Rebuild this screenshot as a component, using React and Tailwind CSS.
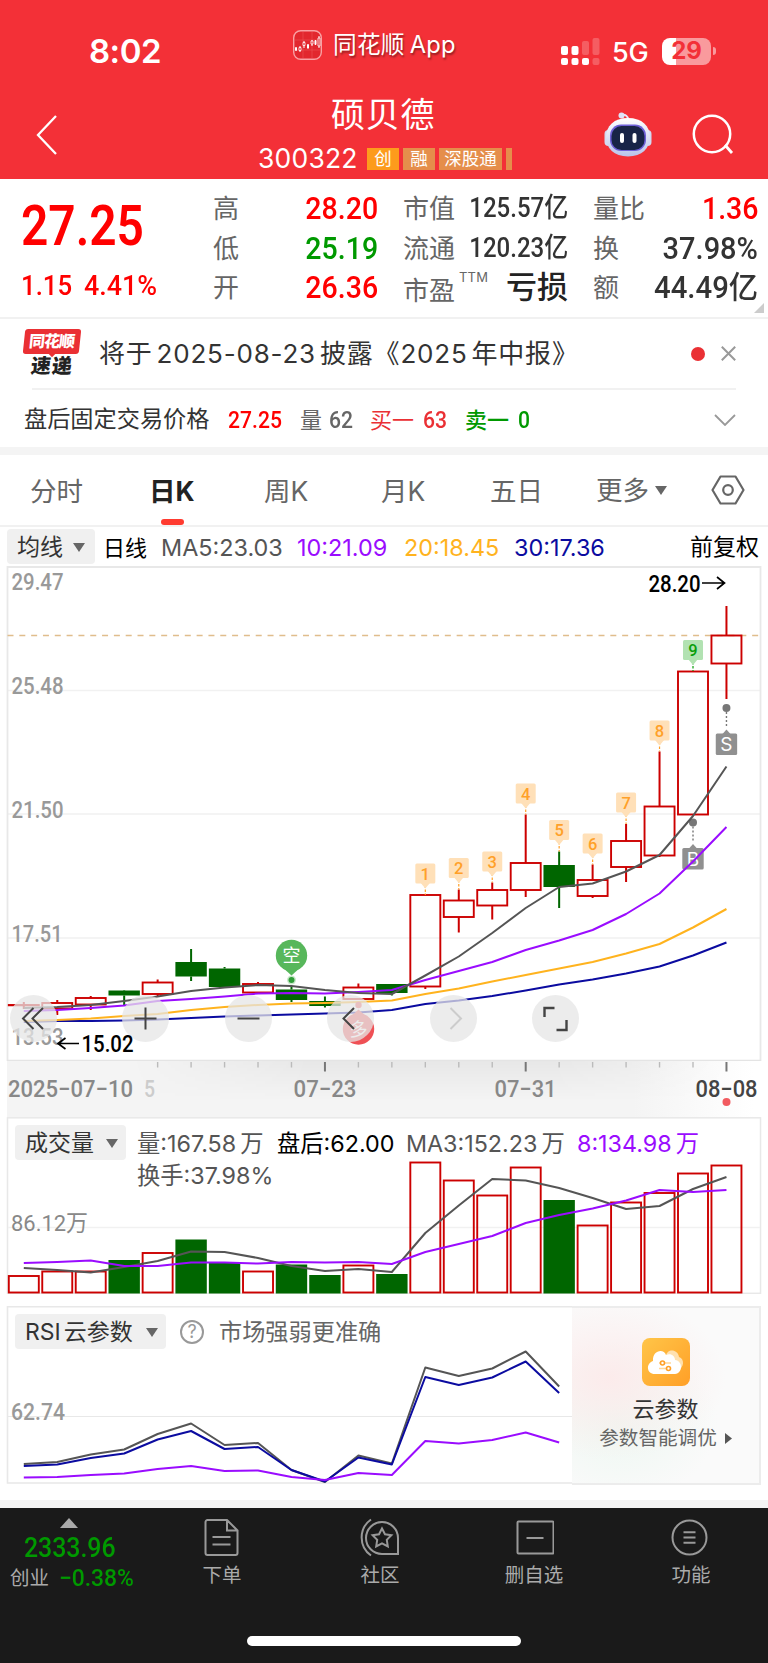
import React from "react";

const DARK = "#555555";
const PURPLE = "#9a0cff";
const ORANGE = "#ffb31e";
const NAVY = "#0b0ba0";
const RED = "#cc0000";
const GREEN = "#006600";

// [open/close top, open/close bottom, high, low, is up]
const candles = [
  [1005, 1005, 1002, 1009, true],
  [1003, 1008.5, 1000, 1015, true],
  [998, 1004.5, 996, 1010, true],
  [990.5, 995.5, 990, 1006, false],
  [982.5, 994, 979.5, 996.5, true],
  [962, 976.5, 949, 981, false],
  [968.5, 987, 967, 987, false],
  [984, 992.5, 982, 992.5, true],
  [989.5, 1000, 986, 1002, false],
  [1001, 1006, 996.5, 1007.5, false],
  [987.5, 999, 983.5, 999, true],
  [984, 993, 984, 995.5, false],
  [895, 986.5, 895, 989, true],
  [900.5, 917, 889.5, 932.5, true],
  [890, 905.5, 882.5, 919.5, true],
  [863, 890, 814.5, 897, true],
  [865, 887, 851.5, 908, false],
  [880, 896, 864.5, 898, true],
  [841, 867, 824, 882, true],
  [806.5, 855.5, 751.5, 857, true],
  [671.5, 814.5, 671.5, 814.5, true],
  [635.5, 663.5, 606, 699, true],
];

const ma5 = [1008, 1007, 1005, 1001, 996.5, 991, 987.5, 985, 986, 990, 993, 994, 975.5, 956.5, 933, 908, 887, 883.5, 871.5, 855, 816, 766.5];
const ma10 = [1011, 1010, 1008, 1005.5, 1001, 999, 996.5, 993.5, 993, 993.5, 992, 990, 980, 971, 962, 950, 940.5, 930, 914, 893.5, 861.5, 827];
const ma20 = [1021, 1020, 1018.5, 1016, 1014, 1010, 1007, 1005, 1003.5, 1003, 1002, 1000.5, 994, 988.5, 981.5, 975, 968.5, 962, 953.5, 944, 927.5, 909];
const ma30 = [1022, 1021, 1021, 1020.5, 1019.5, 1018, 1016.5, 1015.5, 1014.5, 1013.5, 1012.5, 1010, 1004, 1000.5, 996, 990.5, 984.5, 979.5, 973.5, 966.5, 955.5, 942.5];

const volumes = [1275.5, 1271, 1271, 1260, 1252.5, 1239.5, 1262, 1271, 1264.5, 1275, 1265, 1274, 1162, 1180, 1195, 1167, 1200, 1225, 1202, 1192.5, 1173, 1165];
const vol3 = [1268, 1270, 1272.5, 1267, 1261, 1251.5, 1252, 1258, 1266, 1271, 1269, 1272, 1233, 1205.5, 1179, 1180.5, 1188, 1198, 1209, 1206, 1189, 1177];
const vol8 = [1263, 1262, 1260.5, 1266, 1266, 1262.5, 1262.5, 1263.5, 1262, 1262.5, 1262, 1264, 1252, 1244, 1236, 1223, 1215, 1208.5, 1200.5, 1190, 1192, 1190];

const rsi6 = [1464, 1462, 1454.5, 1449.5, 1434, 1423.5, 1445, 1443, 1470, 1482, 1455.5, 1463.5, 1367.5, 1376, 1368.5, 1351.5, 1386.5];
const rsi12 = [1466, 1464.5, 1458, 1453.5, 1439.5, 1431, 1449, 1447, 1470, 1481.5, 1457.5, 1464.5, 1377, 1385, 1377.5, 1361.5, 1393];
const rsi24 = [1477.5, 1477, 1475, 1473.5, 1469, 1466, 1471, 1470.5, 1477, 1480, 1473, 1475, 1441, 1443.5, 1440, 1432.5, 1442.5];

const nine = [
  [1, 12, 863.5],
  [2, 13, 858],
  [3, 14, 851.5],
  [4, 15, 783.5],
  [5, 16, 820],
  [6, 17, 833.5],
  [7, 18, 792.5],
  [8, 19, 720.5],
  [9, 20, 640],
];

const cx = (i) => 23.8 + i * 33.46;
const points = (data) => data.map((y, i) => `${cx(i)},${y}`).join(" ");

const Line = ({ data, color }) => (
  <polyline points={points(data)} fill="none" stroke={color} strokeWidth="2" strokeLinejoin="round" />
);

const Label = ({ x, y, w, size = 24, color = "#999999", weight = 500, children }) => (
  <text
    x={x}
    y={y}
    fontSize={size}
    fill={color}
    fontWeight={weight}
    textLength={w}
    lengthAdjust="spacingAndGlyphs"
    fontFamily="Roboto, 'Noto Sans CJK SC', sans-serif"
  >
    {children}
  </text>
);

const Num = ({ className, children }) => (
  <span className={`inline-block whitespace-nowrap font-['Roboto','Noto_Sans_CJK_SC',sans-serif] font-medium ${className}`}>{children}</span>
);

const Caret = () => (
  <svg className="shrink-0" width="12" height="9" viewBox="0 0 12 9">
    <path d="M0 0h12L6 9z" fill="#666" />
  </svg>
);

const StatusBar = () => (
  <div className="flex h-[94px] items-center text-white">
    <div className="ml-[89px] w-[204px] pt-[9px] text-[33px] font-semibold leading-none tracking-[-0.5px]">8:02</div>
    <svg width="29" height="30" viewBox="0 0 29 30" className="-mt-[5px]">
      <rect x="0.7" y="0.7" width="27.6" height="28.6" rx="7" fill="#e2272e" stroke="#f9a0a3" strokeWidth="1.4" />
      <path d="M2 10h25M2 20h25M10 2v26M19 2v26" stroke="#ee5a5f" strokeWidth="0.5" />
      <path d="M3 17v4M7 16v6M11 11v7M15 14v5M19 10v6M22.500 10v5M26 6v12" stroke="#fff" strokeWidth="1" />
      <path d="M2 17.500h2v3H2zM14 14.500h2v3.500h-2zM21.500 10.500h2v4h-2z" fill="#fff" />
      <path d="M6 17.500h2v3H6zM10 12.500h2v3h-2zM18 11h2v3h-2zM25 8h2v8h-2z" fill="#e2272e" stroke="#fff" strokeWidth="0.8" />
    </svg>
    <div className="-mt-[4px] ml-[11px] w-[228px] whitespace-nowrap text-[23.7px] leading-none tracking-[0.2px] [text-shadow:1px_2px_2px_rgba(0,0,0,.4)]">
      同花顺<span className="ml-[5px]">App</span>
    </div>
    <svg width="40" height="28" viewBox="0 0 40 28" className="mt-[9px]" fill="#fff">
      <rect x="0" y="8" width="7" height="9" rx="2" />
      <rect x="10.500" y="8" width="7" height="9" rx="2" />
      <rect x="21" y="3" width="7" height="14" rx="2" opacity=".22" />
      <rect x="31.500" y="0" width="7" height="17" rx="2" opacity=".22" />
      <rect x="0" y="20" width="7" height="7" rx="2" />
      <rect x="10.500" y="20" width="7" height="7" rx="2" />
      <rect x="21" y="20" width="7" height="7" rx="2" />
      <rect x="31.500" y="20" width="7" height="7" rx="2" opacity=".22" />
    </svg>
    <div className="ml-[11px] w-[50px] pt-[10px] text-[27px] font-medium leading-none tracking-[-0.3px]">5G</div>
    <div className="mt-[8px] flex h-[27px] w-[49px] items-center justify-center rounded-[8px] bg-[linear-gradient(90deg,#fff_29%,#f99a9d_29%)] text-[24px] font-bold leading-none text-[#f33037]">
      29
    </div>
    <div className="ml-[2px] mt-[8px] h-[8px] w-[3px] rounded-r-full bg-[#f99a9d]" />
  </div>
);

const Robot = () => (
  <svg width="48" height="46" viewBox="0 0 48 46" className="shrink-0">
    <defs>
      <linearGradient id="rb" x1="0" y1="0" x2="0" y2="1">
        <stop offset="0" stopColor="#ffffff" />
        <stop offset="1" stopColor="#b9c3ea" />
      </linearGradient>
    </defs>
    <path d="M17.500 4q6-1 7 5" fill="none" stroke="#e7e9fb" strokeWidth="2" />
    <circle cx="17.500" cy="4.500" r="3" fill="#dfe3f7" />
    <rect x="0.500" y="19" width="8" height="16" rx="4" fill="#d4d9f2" />
    <rect x="39.500" y="19" width="8" height="16" rx="4" fill="#d4d9f2" />
    <path d="M24 7c14 0 22 8 22 19S38 45.500 24 45.500 2 37 2 26 10 7 24 7z" fill="url(#rb)" />
    <rect x="6" y="13.500" width="36" height="26.500" rx="11" fill="#6d5fd6" />
    <rect x="7.500" y="15" width="33" height="24" rx="10" fill="#182447" />
    <rect x="16" y="22" width="4" height="10" rx="2" fill="#fff" />
    <rect x="28.500" y="22" width="4" height="10" rx="2" fill="#fff" />
  </svg>
);

const TitleBar = () => (
  <div className="flex h-[85px] text-white">
    <svg width="22" height="40" viewBox="0 0 22 40" className="ml-[36px] mt-[21px]">
      <path d="M20 1L2 20l18 19" fill="none" stroke="#fff" strokeWidth="2.300" />
    </svg>
    <div className="ml-[200px] w-[254px] shrink-0">
      <div className="h-[51px] pl-[73px] pt-[3px] text-[34px] leading-[36px] tracking-[0.8px]">硕贝德</div>
      <div className="flex h-[27px] items-center">
        <span className="-mt-px w-[110px] text-[26.5px] leading-none tracking-[0.2px]">300322</span>
        <div className="flex gap-1 pt-[1px] text-[17.5px] leading-[22px]">
          <span className="w-8 bg-[#fd9b1c] text-center">创</span>
          <span className="w-8 bg-[#e58e4b] text-center">融</span>
          <span className="w-[63px] bg-[#e58e4b] text-center">深股通</span>
          <span className="w-[6px] bg-[#e58e4b]" />
        </div>
      </div>
    </div>
    <div className="ml-[92px] mt-[17px] flex">
      <Robot />
      <svg width="42" height="42" viewBox="0 0 42 42" className="ml-[40px] mt-[3px]">
        <circle cx="20" cy="20" r="18.200" fill="none" stroke="#fff" strokeWidth="2.500" />
        <path d="M33 31l7 8" stroke="#fff" strokeWidth="2.800" />
      </svg>
    </div>
  </div>
);

const Quote = () => (
  <div className="relative flex h-[140px] border-b-2 border-[#f1f1f1]">
    <div className="w-[213px] pl-[21px] pt-[18px]">
      <Num className="h-[75px] w-[160px] origin-left scale-x-[.87] text-[55px] font-semibold leading-[58px] text-[#ff0000]">27.25</Num>
      <div className="flex text-[#ff0000]">
        <Num className="w-[63px] origin-left scale-x-[.92] text-[28px] leading-[28px]">1.15</Num>
        <Num className="origin-left scale-x-[.96] text-[28px] leading-[28px]">4.41%</Num>
      </div>
    </div>
    <div className="w-[165px] pt-[10px] text-[26px] leading-[39.5px] text-[#666]">
      <div className="flex justify-between">高<Num className="origin-right scale-x-[.92] text-[31px] text-[#ff0000]">28.20</Num></div>
      <div className="flex justify-between">低<Num className="origin-right scale-x-[.92] text-[31px] text-[#009900]">25.19</Num></div>
      <div className="flex justify-between">开<Num className="origin-right scale-x-[.92] text-[31px] text-[#ff0000]">26.36</Num></div>
    </div>
    <div className="ml-[25px] w-[165px] pt-[10px] text-[26px] leading-[39.5px] text-[#666]">
      <div className="flex justify-between">市值<Num className="-ml-5 origin-right scale-x-[.89] text-[27px] text-[#333]">125.57亿</Num></div>
      <div className="flex justify-between">流通<Num className="-ml-5 origin-right scale-x-[.89] text-[27px] text-[#333]">120.23亿</Num></div>
      <div className="flex">
        <span className="pt-[3px]">市盈</span>
        <span className="-mt-[4px] ml-1 h-4 text-[13px] leading-[26px] tracking-[0.2px]">TTM</span>
        <span className="-mt-px ml-auto text-[31px] font-medium text-[#222]">亏损</span>
      </div>
    </div>
    <div className="ml-[25px] w-[165px] pt-[10px] text-[26px] leading-[39.5px] text-[#666]">
      <div className="flex justify-between">量比<Num className="origin-right scale-x-[.92] text-[31px] text-[#ff0000]">1.36</Num></div>
      <div className="flex justify-between">换<Num className="origin-right scale-x-[.935] text-[31px] text-[#333]">37.98%</Num></div>
      <div className="flex justify-between">额<Num className="origin-right scale-x-[.945] text-[31px] text-[#333]">44.49亿</Num></div>
    </div>
    <svg className="absolute bottom-1 right-1" width="10" height="10" viewBox="0 0 10 10">
      <path d="M10 0v10H0z" fill="#ccc" />
    </svg>
  </div>
);

const News = () => (
  <>
    <div className="flex h-[69px] items-center pl-[24px] pr-8">
      <div className="relative mt-[-2px] h-[48px] w-[58px] shrink-0 font-black leading-none">
        <div className="h-[25px] w-[56px] -skew-x-6 rounded-[3px] bg-[#ea3034] pt-[4px] text-center text-[16px] text-white">
          <span className="-ml-px tracking-[-1px]">同花顺</span>
        </div>
        <div className="absolute left-[25px] top-[21px] h-[6px] w-[6px] rotate-45 bg-[#ea3034]" />
        <div className="-skew-x-6 pl-[7px] pt-[2px] text-[20px] tracking-[1px] text-[#222]">速递</div>
      </div>
      <div className="ml-[17px] whitespace-nowrap text-[26px] leading-none tracking-[0.8px] text-[#333]">
        将于<span className="mx-[4px]">2025-08-23</span>披露《2025<span className="ml-[4px]">年中报》</span>
      </div>
      <div className="ml-auto mr-[16px] h-[14px] w-[14px] shrink-0 rounded-full bg-[#ea3034]" />
      <svg width="15" height="15" viewBox="0 0 15 15" className="shrink-0">
        <path d="M.8.8l13.400 13.400M14.200.8L.8 14.200" stroke="#999" strokeWidth="2" />
      </svg>
    </div>
    <div className="mx-8 h-[2px] bg-[#f1f1f1]" />
    <div className="flex h-[57px] items-center pl-[24px] pr-8 pt-[2px] text-[23.2px] leading-none">
      <span className="w-[204px] text-[#333]">盘后固定交易价格</span>
      <Num className="w-[72px] origin-left scale-x-[.88] text-[24px] text-[#ff0000]">27.25</Num>
      <span className="w-[29px] text-[22px] text-[#666]">量</span>
      <Num className="w-[41px] origin-left scale-x-[.88] text-[24px] text-[#666]">62</Num>
      <span className="w-[53px] text-[22px] text-[#ea3034]">买一</span>
      <Num className="w-[42px] origin-left scale-x-[.88] text-[24px] text-[#ea3034]">63</Num>
      <span className="w-[53px] text-[22px] font-medium text-[#009900]">卖一</span>
      <Num className="origin-left scale-x-[.88] text-[24px] text-[#009900]">0</Num>
      <svg width="22" height="12" viewBox="0 0 22 12" className="ml-auto">
        <path d="M1 1l10 10L21 1" fill="none" stroke="#999" strokeWidth="1.800" />
      </svg>
    </div>
    <div className="h-[8px] bg-[#f4f4f4]" />
  </>
);

const Tabs = () => (
  <div className="flex h-[72px] border-b-2 border-[#f1f1f1] pl-[30px] text-[26.5px] leading-[72px] text-[#666]">
    <span className="w-[119px]">分时</span>
    <span className="relative w-[115px] font-bold text-[#222]">
      日K
      <i className="absolute bottom-0 left-[12px] h-[6px] w-[23px] rounded-[3px] bg-[#ff3b30]" />
    </span>
    <span className="w-[117px]">周K</span>
    <span className="w-[109px]">月K</span>
    <span className="w-[106px]">五日</span>
    <span className="flex w-[115px] items-center gap-[6px]">更多<Caret /></span>
    <svg width="34" height="30" viewBox="0 0 34 30" className="mt-[20px]">
      <path d="M9.500 1.500h15L32.500 15l-8 13.500h-15L1.500 15z" fill="none" stroke="#666" strokeWidth="2.200" strokeLinejoin="round" />
      <circle cx="17" cy="15" r="4.800" fill="none" stroke="#666" strokeWidth="2.200" />
    </svg>
  </div>
);

const MaRow = () => (
  <div className="flex h-[39px] items-center whitespace-nowrap pl-[7px] pr-[9px] text-[23.4px] leading-none">
    <div className="flex h-[35px] w-[88px] items-center justify-between rounded-[4px] bg-[#f0f0f0] pl-[10px] pr-[10px] pt-px text-[23px] text-[#333]">
      均线<Caret />
    </div>
    <span className="ml-2 w-[58px] pt-[2px] text-[22px] text-black">日线</span>
    <span className="w-[136px] pt-[2px] text-[#555]">MA5:23.03</span>
    <span className="w-[107px] pt-[2px] text-[#9a0cff]">10:21.09</span>
    <span className="w-[110px] pt-[2px] text-[#ffb31e]">20:18.45</span>
    <span className="pt-[2px] text-[#0b0ba0]">30:17.36</span>
    <span className="ml-auto pt-[2px] text-[23px] text-black">前复权</span>
  </div>
);

const NineTag = ({ n, i, y }) => {
  const x = cx(i);
  const bg = n === 9 ? "#b2e2b2" : "#ffe0b8";
  const fg = n === 9 ? "#0a9e0a" : "#ffa028";
  const end = n === 9 ? 671 : candles[i][2];
  return (
    <g>
      <path d={`M${x} ${y + 22}V${end}`} stroke={fg} strokeWidth="1.200" strokeDasharray="2.500 1.500" />
      <path d={`M${x - 5} ${y + 19}h10l-5 6z`} fill={bg} />
      <rect x={x - 10} y={y} width="20" height="20" rx="1.500" fill={bg} />
      <text x={x} y={y + 16} textAnchor="middle" fontSize="16.500" fontWeight="500" fill={fg} fontFamily="Roboto, sans-serif">
        {n}
      </text>
    </g>
  );
};

const TradeTag = ({ x, y, children }) => (
  <g>
    <circle cx={x} cy={y} r="4" fill="#777" />
    <path d={`M${x} ${y + 4}v15`} stroke="#777" strokeWidth="1.400" strokeDasharray="2 2" />
    <path d={`M${x - 4} ${y + 26}l4-4.500 4 4.500z`} fill="#909090" />
    <rect x={x - 10.7} y={y + 25.5} width="21.4" height="21.500" rx="1.500" fill="#909090" />
    <text x={x} y={y + 43} textAnchor="middle" fontSize="19" fill="#fff" fontFamily="Inter, sans-serif">
      {children}
    </text>
  </g>
);

// back, zoom in, zoom out, previous, next, full screen
const tools = [
  "M23.500 13L13 23.500 23.500 34M33 13L22.500 23.500 33 34",
  "M12.500 23.500h22M23.500 12.500v22",
  "M12.500 23.500h22",
  "M27 13L16.500 23.500 27 34",
  "M20.500 13L31 23.500 20.500 34",
  "M12.500 22V13h10M34.500 25v10h-10",
];

const KChart = () => (
  <div className="relative h-[495px]">
    <svg width="768" height="495" viewBox="0 566 768 495" className="block">
      <path d="M8 690.500H760M8 814H760M8 938H760" stroke="#f1f1f1" strokeWidth="1.500" />
      <path d="M7.500 1061V567H760.500V1061" fill="none" stroke="#e8e8e8" strokeWidth="1.800" />
      <path d="M7 1060.500H761" stroke="#e4e4e4" strokeWidth="1.500" />
      <path d="M7.500 635.500H759" stroke="#e0bd8c" strokeWidth="1.300" strokeDasharray="6 5.820" />
      <Label x="11.500" y="590" w="52">29.47</Label>
      <Label x="11.500" y="694" w="52">25.48</Label>
      <Label x="11.500" y="817.500" w="52">21.50</Label>
      <Label x="11.500" y="941.500" w="51">17.51</Label>
      <Label x="11.500" y="1045" w="52">13.53</Label>
      {candles.map(([top, bottom, high, low, up], i) => {
        const x = cx(i);
        const color = up ? RED : GREEN;
        return (
          <g key={i}>
            <path d={`M${x} ${high}V${top}M${x} ${bottom}V${low}`} stroke={color} strokeWidth="2" />
            {up ? (
              <rect x={x - 15} y={top} width="30" height={bottom - top || 0.3} fill="none" stroke={color} strokeWidth="1.900" />
            ) : (
              <rect x={x - 15.7} y={top} width="31.400" height={bottom - top} fill={color} />
            )}
          </g>
        );
      })}
      <TradeTag x={cx(20)} y={822.5}>B</TradeTag>
      <TradeTag x={cx(21)} y={708}>S</TradeTag>
      <Line data={ma30} color={NAVY} />
      <Line data={ma20} color={ORANGE} />
      <Line data={ma10} color={PURPLE} />
      <Line data={ma5} color={DARK} />
      {nine.map(([n, i, y]) => (
        <NineTag key={n} n={n} i={i} y={y} />
      ))}
      <circle cx="291.500" cy="980" r="4.500" fill="#c9e8ca" />
      <circle cx="291.500" cy="980" r="3" fill="#2f9e38" />
      <path d="M281 966l10.500 9.500 10.500-9.500z" fill="#57b75b" />
      <circle cx="291.500" cy="955.500" r="15.700" fill="#57b75b" />
      <text x="291.500" y="962" textAnchor="middle" fontSize="18" fill="#fff" fontFamily="'Noto Sans CJK SC', sans-serif">空</text>
      <circle cx="358.500" cy="1005" r="3.200" fill="#ef5055" />
      <path d="M348 1019l10.500-9.500 10.500 9.500z" fill="#ef5055" />
      <circle cx="358.500" cy="1029" r="15.700" fill="#ef5055" />
      <text x="358.500" y="1035.500" textAnchor="middle" fontSize="18" fill="#fff" fontFamily="'Noto Sans CJK SC', sans-serif">多</text>
      <Label x="648.500" y="592" w="52" color="#000">28.20</Label>
      <path d="M702 583h22M717 577l7.500 6-7.500 6" fill="none" stroke="#000" strokeWidth="1.700" />
    </svg>
    <div className="absolute left-[10px] top-[429px] flex gap-[55.4px]">
      {tools.map((d, i) => (
        <svg key={i} width="47" height="47" viewBox="0 0 47 47" className={i === 0 ? "mr-[10px]" : ""}>
          <circle cx="23.500" cy="23.500" r="23.500" fill="#e6e6e6" fillOpacity=".75" />
          <path d={d} fill="none" stroke={i === 4 ? "#ccc" : "#444"} strokeWidth={i === 5 ? 2.4 : 2} />
        </svg>
      ))}
    </div>
    <svg className="absolute left-[56px] top-[460px] overflow-visible" width="90" height="34" viewBox="56 1026 90 34">
      <path d="M79 1043.500H58.500M65.500 1038l-7.500 5.500 7.500 5.500" fill="none" stroke="#000" strokeWidth="1.700" />
      <Label x="81.500" y="1052" w="52" color="#000">15.02</Label>
    </svg>
  </div>
);

const TimeAxis = () => (
  <div className="mx-[7px] h-[56px] w-[754px] bg-[linear-gradient(90deg,#f4f4f4_83%,#fff_99%)]">
    <svg width="754" height="56" viewBox="7 1061 754 56" className="block overflow-visible">
      <defs>
        <linearGradient id="shade" x1="0" y1="0" x2="0" y2="1">
          <stop offset="0" stopColor="#000" stopOpacity=".05" />
          <stop offset="1" stopColor="#000" stopOpacity="0" />
        </linearGradient>
        <linearGradient id="side" x1="0" y1="0" x2="1" y2="0">
          <stop offset="0" stopColor="#fff" stopOpacity="0" />
          <stop offset=".3" stopColor="#fff" />
          <stop offset=".7" stopColor="#fff" />
          <stop offset="1" stopColor="#fff" stopOpacity="0" />
        </linearGradient>
        <mask id="fade">
          <rect x="130" y="1061" width="600" height="56" fill="url(#side)" />
        </mask>
      </defs>
      <rect x="130" y="1061" width="600" height="40" fill="url(#shade)" mask="url(#fade)" />
      {candles.map((c, i) => {
        if (i < 4) return null;
        const major = i === 9 || i === 15 || i === 21;
        return <path key={i} d={`M${cx(i)} 1062v${major ? 9.5 : 5.5}`} stroke={major ? "#777" : "#bbb"} strokeWidth={major ? 2 : 1.4} />;
      })}
      <Label x="8" y="1096.500" w="125" color="#888">2025−07−10</Label>
      <Label x="144" y="1096.500" w="11" color="#ccc">5</Label>
      <Label x="293.500" y="1096.500" w="63" color="#888">07−23</Label>
      <Label x="494.500" y="1096.500" w="62" color="#888">07−31</Label>
      <Label x="695.500" y="1096.500" w="62" color="#444">08−08</Label>
      <circle cx="726.500" cy="1102" r="4" fill="#f25b60" />
    </svg>
  </div>
);

const Volume = () => (
  <div className="relative h-[177px]">
    <svg width="768" height="177" viewBox="0 1117 768 177" className="block">
      <rect x="7.500" y="1117.800" width="753" height="175.500" fill="none" stroke="#e8e8e8" strokeWidth="1.500" />
      <path d="M8 1227.500H760" stroke="#f1f1f1" strokeWidth="1.500" />
      <Label x="11" y="1231" w="77" size="22.500" color="#888" weight="400">86.12万</Label>
      {volumes.map((y, i) =>
        candles[i][4] ? (
          <rect key={i} x={cx(i) - 15} y={y + 0.5} width="30" height={1292 - y} fill="none" stroke={RED} strokeWidth="1.900" />
        ) : (
          <rect key={i} x={cx(i) - 15.7} y={y} width="31.400" height={1293.5 - y} fill={GREEN} />
        )
      )}
      <Line data={vol3} color={DARK} />
      <Line data={vol8} color={PURPLE} />
    </svg>
    <div className="absolute inset-x-0 top-[8px] flex whitespace-nowrap pl-[15px] text-[23.3px] leading-[37px]">
      <div className="flex h-[35px] w-[111px] items-center justify-between rounded-[4px] bg-[#f0f0f0] pl-[10px] pr-[8px] pt-px text-[23px] text-[#333]">
        成交量<Caret />
      </div>
      <div className="ml-[11px] w-[140px] text-[#555]">
        <div>量:167.58<span className="ml-[4px]">万</span></div>
        <div className="-mt-[5px]">换手:37.98%</div>
      </div>
      <span className="w-[129px] text-black">盘后:62.00</span>
      <span className="w-[171px] text-[#555]">MA3:152.23<span className="ml-[4px]">万</span></span>
      <span className="text-[#9a0cff]">8:134.98<span className="ml-[4px]">万</span></span>
    </div>
  </div>
);

const Rsi = () => (
  <div className="relative mt-3 flex h-[179px]">
    <svg width="572" height="179" viewBox="0 1306 572 179" className="block shrink-0">
      <path d="M572 1306.800H7.500V1483H572" fill="none" stroke="#e8e8e8" strokeWidth="1.600" />
      <path d="M8 1416.500H572" stroke="#e8e8e8" strokeWidth="1.200" />
      <Label x="11" y="1420" w="54">62.74</Label>
      <Line data={rsi6} color={DARK} />
      <Line data={rsi12} color={NAVY} />
      <Line data={rsi24} color={PURPLE} />
    </svg>
    <div className="flex w-[189px] flex-col items-center border-y-2 border-r-2 border-[#ececec] bg-[radial-gradient(ellipse_at_20%_40%,#fcebeb_0%,transparent_55%),radial-gradient(ellipse_at_25%_65%,#edf7f1_0%,transparent_50%)] bg-[#fafafa] pt-[30px]">
      <svg width="48" height="48" viewBox="0 0 48 48">
        <defs>
          <linearGradient id="cloud" x1="0" y1="0" x2="1" y2="1">
            <stop offset="0" stopColor="#ffc548" />
            <stop offset="1" stopColor="#ff9f27" />
          </linearGradient>
        </defs>
        <rect width="48" height="48" rx="8" fill="url(#cloud)" />
        <path d="M24 18c1-8 12-7 13 1 6 2 5 11-1 13z" fill="#ffe1b0" />
        <path d="M13 36c-9 0-9-11-2-13C10 12 22 10 24 17c5-2 9 1 9 5 8 1 8 13 0 14z" fill="#fff" />
        <path d="M17 25h12M17 30.500h12" stroke="#ffd79a" strokeWidth="1.600" />
        <circle cx="20.500" cy="25" r="2" fill="#fff" stroke="#ff9f27" strokeWidth="1.600" />
        <circle cx="26.500" cy="30.500" r="2" fill="#fff" stroke="#ff9f27" strokeWidth="1.600" />
      </svg>
      <div className="mt-[7px] text-[22px] leading-[32px] text-[#333]">云参数</div>
      <div className="-mt-px flex items-center gap-[8px] text-[19.6px] leading-[28px] text-[#666]">
        参数智能调优
        <svg width="7" height="11" viewBox="0 0 7 11">
          <path d="M0 0l7 5.500L0 11z" fill="#555" />
        </svg>
      </div>
    </div>
    <div className="absolute left-[15px] top-[8px] flex h-[35px] items-center whitespace-nowrap text-[23px] leading-none">
      <div className="flex h-[35px] w-[151px] items-center justify-between rounded-[4px] bg-[#f0f0f0] pl-[10px] pr-[8px] pt-px text-[#333]">
        <span>RSI<span className="ml-[3px]">云参数</span></span><Caret />
      </div>
      <span className="ml-[14px] flex h-[24px] w-[24px] items-center justify-center rounded-full border-2 border-[#999] text-[18px] text-[#999]">?</span>
      <span className="ml-[15px] pt-[2px] text-[23.2px] text-[#666]">市场强弱更准确</span>
    </div>
  </div>
);

const NavItem = ({ className, label, children }) => (
  <div className={`flex flex-col items-center ${className}`}>
    <svg width="42" height="40" viewBox="0 0 42 40" fill="none" stroke="#999" strokeWidth="2" className="-ml-[3px]">
      {children}
    </svg>
    <span className="mt-[6px] whitespace-nowrap text-[19.5px] leading-[24px] text-[#aaa]">{label}</span>
  </div>
);

const BottomNav = () => (
  <div className="h-[155px] bg-[#1a1a1a]">
    <div className="flex h-[128px] pt-[9px]">
      <div className="w-[138px]">
        <svg width="18" height="10" viewBox="0 0 18 10" className="ml-[60px] mt-px">
          <path d="M9 0l9 10H0z" fill="#aaa" />
        </svg>
        <Num className="ml-[24px] mt-[6px] origin-left scale-x-[.92] text-[27px] leading-[28px] text-[#009900]">2333.96</Num>
        <div className="flex items-center pl-[10px] pt-px text-[19.5px] leading-[28px] text-[#aaa]">
          <span className="w-[54px]">创业</span>
          <Num className="origin-left scale-x-[.95] text-[24px] text-[#009900]">−0.38%</Num>
        </div>
      </div>
      <NavItem className="ml-[52px] w-[64px]" label="下单">
        <path d="M27 3H7.500a2 2 0 0 0-2 2v31a2 2 0 0 0 2 2h28a2 2 0 0 0 2-2V13.500zM27 3v10.500h10.500M12.500 20h18M12.500 27.500h18" />
      </NavItem>
      <NavItem className="ml-[94px] w-[64px]" label="社区">
        <path d="M40 37H24A16 16 0 1 1 40 21zM13 2.500a22 22 0 0 0 0 36" />
        <path d="M24 11.500l3 5.800 6.400 1-4.600 4.600 1 6.500-5.800-3-5.800 3 1-6.500-4.600-4.600 6.400-1z" />
      </NavItem>
      <NavItem className="ml-[90px] w-[64px]" label="删自选">
        <rect x="5.500" y="4.500" width="36" height="32" rx="1" />
        <path d="M14.500 21h17" />
      </NavItem>
      <NavItem className="ml-[93px] w-[64px]" label="功能">
        <circle cx="20.500" cy="20.500" r="17" />
        <path d="M14.500 15.300h12M14.500 20.500h12M14.500 25.700h12" />
      </NavItem>
    </div>
    <div className="ml-[247px] h-[10px] w-[274px] rounded-full bg-white" />
  </div>
);

const App = () => {
  return (
    <div className="h-[1663px] w-[768px] overflow-hidden bg-white font-['Inter','Noto_Sans_CJK_SC',sans-serif]">
      <div className="bg-[#f33037]">
        <StatusBar />
        <TitleBar />
      </div>
      <Quote />
      <News />
      <Tabs />
      <MaRow />
      <KChart />
      <TimeAxis />
      <Volume />
      <Rsi />
      <div className="mt-[15px] h-[8px] bg-[#f4f4f4]" />
      <BottomNav />
    </div>
  );
};

export default App;
